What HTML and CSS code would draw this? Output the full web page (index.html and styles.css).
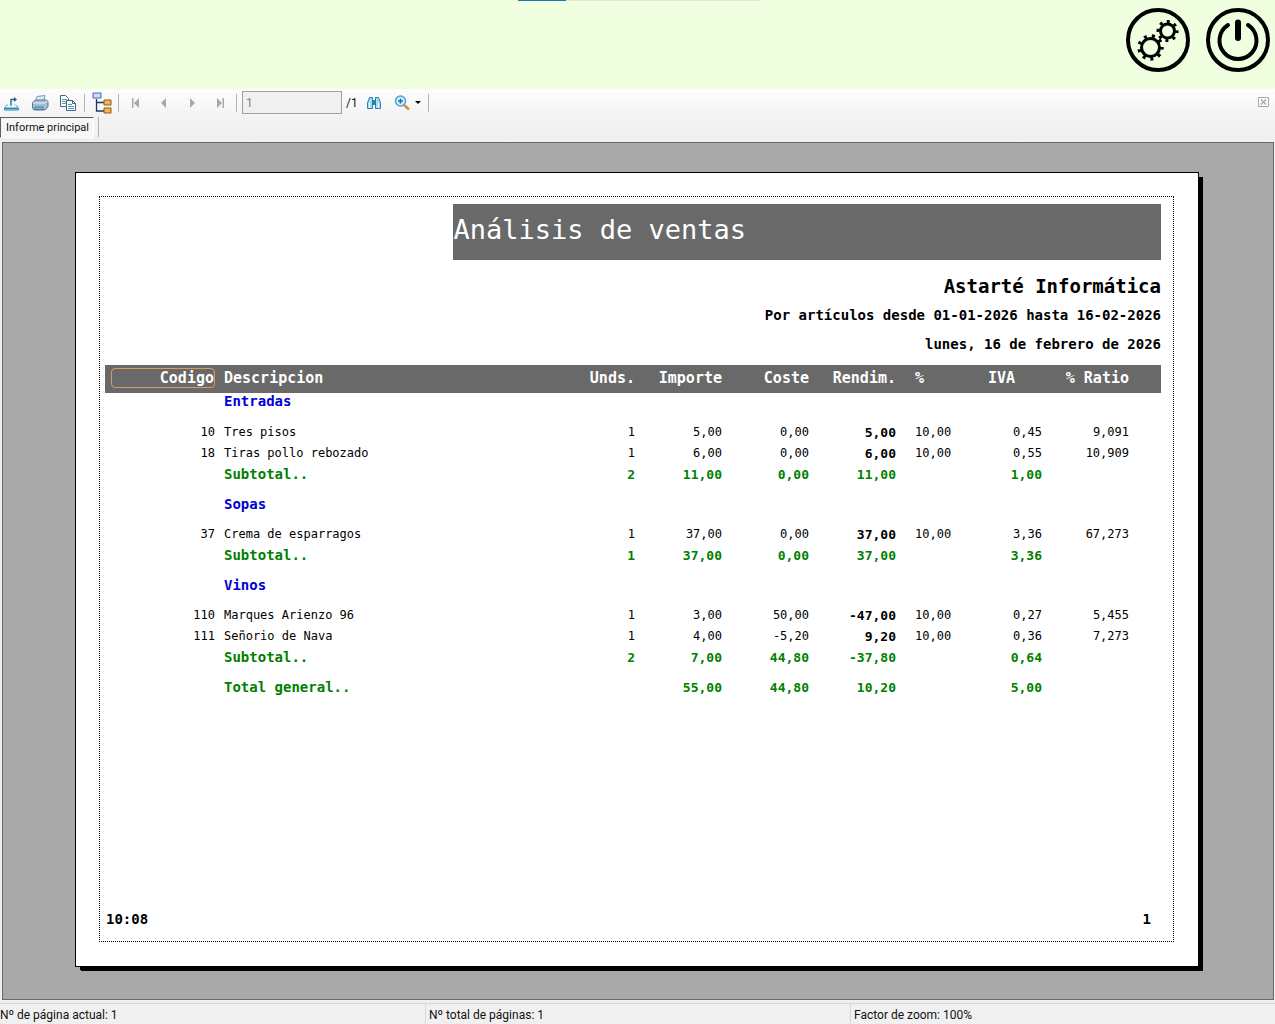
FILE: index.html
```
<!DOCTYPE html>
<html lang="es">
<head>
    <meta charset="UTF-8">
    <meta name="viewport" content="width=device-width, initial-scale=1.0">
    <title>Análisis de ventas</title>
    <link rel="stylesheet" href="styles.css">
</head>
<body>
    <!-- Top bar with the round buttons -->
    <header class="top-bar">
        <div class="progress"><div class="progress-value"></div></div>
        <button class="round-button" aria-label="Configuración">
            <svg viewBox="0 0 64 64" width="64" height="64" fill="none" stroke="#000">
                <circle cx="32" cy="32" r="30" stroke-width="4"/>
                <circle cx="24.500" cy="39.500" r="9" stroke-width="3"/>
                <circle cx="24.500" cy="39.500" r="11.500" stroke-width="3.500" stroke-dasharray="3 5.028" stroke-dashoffset="1"/>
                <circle cx="41.500" cy="23" r="7" stroke-width="3"/>
                <circle cx="41.500" cy="23" r="9.500" stroke-width="3" stroke-dasharray="3 4.461" stroke-dashoffset="1"/>
            </svg>
        </button>
        <button class="round-button" aria-label="Salir">
            <svg viewBox="0 0 64 64" width="64" height="64" fill="none" stroke="#000" stroke-linecap="round">
                <circle cx="32" cy="32" r="30" stroke-width="4"/>
                <path d="M22 17A18.500 18.500 0 1 0 42 17" stroke-width="4"/>
                <path d="M32 14.500v15.500" stroke-width="6"/>
            </svg>
        </button>
    </header>

    <!-- Report toolbar -->
    <div class="toolbar">
        <button class="tool" aria-label="Exportar informe">
            <svg viewBox="0 0 18 18" width="18" height="18" fill="none">
                <path d="M4.500 10.500L1.500 14h14l-3-3.500" fill="#e4f4fb" stroke="#4f9fc0"/>
                <path d="M1.500 14.500h14v1.500h-14z" fill="#bfe6f5" stroke="#2f86b0"/>
                <path d="M8 11.500V5.500h4" stroke="#23607a" stroke-width="1.300"/>
                <path d="M11 3l3 2.500-3 2.500z" fill="#23607a"/>
            </svg>
        </button>
        <button class="tool" aria-label="Imprimir">
            <svg viewBox="0 0 18 18" width="18" height="18">
                <path d="M6 2.500l8-1-1.500 7H4z" fill="#d9ecfa" stroke="#7b98b5"/>
                <path d="M1.500 8.500l3-2.500h11l1.500 1.500v5.500l-3 3H3l-1.500-2z" fill="#a9bbd0" stroke="#5d7898"/>
                <path d="M2 9h11.500l2.500-2" fill="none" stroke="#e8f0f8"/>
                <path d="M4 13h8v2.500H4z" fill="#65c5e8" stroke="#4c7ba0"/>
            </svg>
        </button>
        <button class="tool" aria-label="Copiar">
            <svg viewBox="0 0 18 18" width="18" height="18" stroke="#53616c">
                <path d="M1.500 1.500h5l3 3v8h-8z" fill="#fff"/>
                <path d="M3 5.500h5M3 7.500h5M3 9.500h5" stroke="#3aa0ce"/>
                <path d="M7.500 6.500h6l3 3v7h-9z" fill="#fff"/>
                <path d="M13.500 6.500v3h3" fill="none"/>
                <path d="M9 10.500h4M9 12.500h6M9 14.500h6" stroke="#3aa0ce"/>
            </svg>
        </button>
        <span class="separator"></span>
        <button class="tool" aria-label="Árbol de grupos">
            <svg viewBox="0 0 20 22" width="20" height="22">
                <path d="M4.500 7v12h8M4.500 10.500h8" fill="none" stroke="#123a6b" stroke-width="1.300"/>
                <path d="M1 1h8v5H1z" fill="#c9dcff" stroke="#4a63a8"/>
                <path d="M12 8h7v5h-7z" fill="#f6b54a" stroke="#8a5a20"/>
                <path d="M12 16h7v5h-7z" fill="#f6b54a" stroke="#8a5a20"/>
            </svg>
        </button>
        <span class="separator"></span>
        <button class="tool" aria-label="Primera página" disabled>
            <svg viewBox="0 0 12 12" width="12" height="12" fill="#a8a8a8"><path d="M2 1h1.500v10H2zM9 1v10L4 6z"/></svg>
        </button>
        <button class="tool" aria-label="Página anterior" disabled>
            <svg viewBox="0 0 12 12" width="12" height="12" fill="#a8a8a8"><path d="M8 1v10L3 6z"/></svg>
        </button>
        <button class="tool" aria-label="Página siguiente" disabled>
            <svg viewBox="0 0 12 12" width="12" height="12" fill="#a8a8a8"><path d="M4 1v10l5-5z"/></svg>
        </button>
        <button class="tool" aria-label="Última página" disabled>
            <svg viewBox="0 0 12 12" width="12" height="12" fill="#a8a8a8"><path d="M3 1v10l5-5zM8.500 1H10v10H8.500z"/></svg>
        </button>
        <span class="separator"></span>
        <input class="page-input" id="page" type="text" value="1" disabled>
        <label class="page-total" for="page">/1</label>
        <button class="tool" aria-label="Buscar">
            <svg viewBox="0 0 16 16" width="16" height="16" stroke="#2f7fae">
                <path d="M1.500 13.500V8l2-5.500h3V13.500zM14.500 13.500V8l-2-5.500h-3V13.500z" fill="#a5dcf5"/>
                <path d="M6.500 5.500h3v4h-3z" fill="#2f7fae"/>
                <path d="M3.500 8v5M12.500 8v5" stroke="#fff"/>
            </svg>
        </button>
        <button class="tool zoom-tool" aria-label="Zoom">
            <svg viewBox="0 0 18 18" width="18" height="18" fill="none">
                <path d="M11 11l5 4.500" stroke="#e08a35" stroke-width="2.500"/>
                <circle cx="7.500" cy="7" r="5" fill="#d8f0fc" stroke="#4ba3d5" stroke-width="1.500"/>
                <path d="M7.500 4.500v5M5 7h5" stroke="#1f6cab" stroke-width="1.500"/>
            </svg>
            <svg viewBox="0 0 6 3" width="6" height="3"><path d="M0 0h6L3 3z"/></svg>
        </button>
        <span class="separator"></span>
        <button class="tool close-tool" aria-label="Cerrar">
            <svg viewBox="0 0 11 11" width="11" height="11" fill="none" stroke="#a8a8a8">
                <path d="M.5.5h10v9h-10z"/>
                <path d="M3 2.500l5 5M8 2.500l-5 5" stroke-width="1.300"/>
            </svg>
        </button>
    </div>

    <div class="tabs">
        <button class="tab">Informe principal</button>
        <span class="separator"></span>
    </div>

    <!-- Report page -->
    <main class="viewer">
        <div class="paper">
            <div class="report">
                <h1 class="report-title">Análisis de ventas</h1>
                <div class="company">Astarté Informática</div>
                <div class="report-info">Por artículos desde 01-01-2026 hasta 16-02-2026</div>
                <div class="report-info">lunes, 16 de febrero de 2026</div>

                <table class="sales">
                    <colgroup>
                        <col class="col-code">
                        <col>
                        <col class="col-number">
                        <col class="col-number">
                        <col class="col-number">
                        <col class="col-number">
                        <col class="col-percent">
                        <col class="col-number">
                        <col class="col-ratio">
                    </colgroup>
                    <thead>
                        <tr>
                            <th><span class="selected">Codigo</span></th>
                            <th class="text">Descripcion</th>
                            <th>Unds.</th>
                            <th>Importe</th>
                            <th>Coste</th>
                            <th>Rendim.</th>
                            <th class="percent">%</th>
                            <th class="iva">IVA</th>
                            <th class="ratio">% Ratio</th>
                        </tr>
                    </thead>
                    <tbody>
                        <tr class="group first"><td></td><td class="text" colspan="8">Entradas</td></tr>
                        <tr><td>10</td><td class="text">Tres pisos</td><td>1</td><td>5,00</td><td>0,00</td><td class="yield">5,00</td><td class="percent">10,00</td><td>0,45</td><td class="ratio">9,091</td></tr>
                        <tr><td>18</td><td class="text">Tiras pollo rebozado</td><td>1</td><td>6,00</td><td>0,00</td><td class="yield">6,00</td><td class="percent">10,00</td><td>0,55</td><td class="ratio">10,909</td></tr>
                        <tr class="total"><td></td><td class="text">Subtotal..</td><td>2</td><td>11,00</td><td>0,00</td><td>11,00</td><td></td><td>1,00</td><td></td></tr>
                    </tbody>
                    <tbody>
                        <tr class="group"><td></td><td class="text" colspan="8">Sopas</td></tr>
                        <tr><td>37</td><td class="text">Crema de esparragos</td><td>1</td><td>37,00</td><td>0,00</td><td class="yield">37,00</td><td class="percent">10,00</td><td>3,36</td><td class="ratio">67,273</td></tr>
                        <tr class="total"><td></td><td class="text">Subtotal..</td><td>1</td><td>37,00</td><td>0,00</td><td>37,00</td><td></td><td>3,36</td><td></td></tr>
                    </tbody>
                    <tbody>
                        <tr class="group"><td></td><td class="text" colspan="8">Vinos</td></tr>
                        <tr><td>110</td><td class="text">Marques Arienzo 96</td><td>1</td><td>3,00</td><td>50,00</td><td class="yield">-47,00</td><td class="percent">10,00</td><td>0,27</td><td class="ratio">5,455</td></tr>
                        <tr><td>111</td><td class="text">Señorio de Nava</td><td>1</td><td>4,00</td><td>-5,20</td><td class="yield">9,20</td><td class="percent">10,00</td><td>0,36</td><td class="ratio">7,273</td></tr>
                        <tr class="total"><td></td><td class="text">Subtotal..</td><td>2</td><td>7,00</td><td>44,80</td><td>-37,80</td><td></td><td>0,64</td><td></td></tr>
                    </tbody>
                    <tfoot>
                        <tr class="total grand"><td></td><td class="text">Total general..</td><td></td><td>55,00</td><td>44,80</td><td>10,20</td><td></td><td>5,00</td><td></td></tr>
                    </tfoot>
                </table>

                <div class="report-footer">
                    <span>10:08</span>
                    <span>1</span>
                </div>
            </div>
        </div>
    </main>

    <footer class="status-bar">
        <div>Nº de página actual: 1</div>
        <div>Nº total de páginas: 1</div>
        <div>Factor de zoom: 100%</div>
    </footer>
</body>
</html>
```
FILE: styles.css
```
* {
    box-sizing: border-box;
}

body {
    margin: 0;
    min-height: 100vh;
    display: flex;
    flex-direction: column;
    font-family: Roboto, "Open Sans", sans-serif;
    font-size: 12px;
    color: #111;
    background-color: #f0f0f0;
}

button {
    padding: 0;
    border: none;
    background: none;
    font: inherit;
    color: inherit;
}

svg {
    display: block;
}

/* Top bar */
.top-bar {
    position: relative;
    height: 89px;
    padding: 8px 5px;
    display: flex;
    justify-content: flex-end;
    align-items: flex-start;
    gap: 16px;
    background-color: #f1ffe1;
}

.progress {
    position: absolute;
    top: 0;
    left: 518px;
    width: 242px;
    height: 1px;
    background-color: #e3e8dc;
}

.progress-value {
    width: 20%;
    height: 1px;
    background-color: #1f77ad;
}

.round-button {
    border-radius: 50%;
    cursor: pointer;
}

/* Toolbar */
.toolbar {
    height: 28px;
    padding-bottom: 1px;
    display: flex;
    align-items: center;
    gap: 4px;
    background: linear-gradient(#fdfdfd, #f3f3f3);
}

.tool {
    width: 24px;
    height: 24px;
    display: flex;
    align-items: center;
    justify-content: center;
}

.zoom-tool {
    width: 34px;
    gap: 4px;
}

.close-tool {
    margin-left: auto;
}

.separator {
    width: 1px;
    height: 18px;
    margin-right: 1px;
    background-color: #b4b4b4;
}

.page-input {
    width: 100px;
    height: 23px;
    padding: 0 3px;
    border: 1px solid #a0a0a0;
    background-color: #f0f0f0;
    font: inherit;
    color: #808080;
}

.page-total {
    width: 12px;
}

/* Tabs */
.tabs {
    height: 25px;
    display: flex;
    align-items: flex-start;
    gap: 4px;
    background: linear-gradient(#f3f3f3, #efefef);
}

.tab {
    height: 21px;
    padding: 0 4px 0 5px;
    border: 1px solid;
    border-color: #606060 #fff #fff #606060;
    background-color: #f6f6f6;
    font-size: 11px;
}

.tabs .separator {
    height: 20px;
}

/* Viewer */
.viewer {
    flex: 1;
    margin: 0 1px 3px 2px;
    padding: 29px 74px 32px 72px;
    display: flex;
    border: 1px solid #696969;
    background-color: #a9a9a9;
}

.paper {
    flex: 1;
    padding: 23px 24px 24px 23px;
    display: flex;
    border: 1px solid #000;
    background-color: #fff;
    box-shadow: 5px 5px 0 -1px #000, 4px 4px 0 -1px #000, 5px 4px 0 -1px #000;
}

.report {
    flex: 1;
    padding: 7px 12px 12px 5px;
    display: flex;
    flex-direction: column;
    border: 1px dotted #000;
    font-family: "DejaVu Sans Mono", monospace;
    font-weight: bold;
    color: #000;
}

.report-title {
    height: 56px;
    margin: 0 0 12px 33%;
    font-size: 27px;
    font-weight: normal;
    line-height: 52px;
    color: #fff;
    background-color: #696969;
}

.company {
    font-size: 19px;
    line-height: 29px;
    text-align: right;
}

.report-info {
    font-size: 14px;
    line-height: 29px;
    text-align: right;
}

/* Sales table */
.sales {
    width: 100%;
    margin-top: 6px;
    table-layout: fixed;
    border-collapse: collapse;
    font-size: 12px;
}

.col-code {
    width: 110px;
}

.col-number {
    width: 87px;
}

.col-percent {
    width: 59px;
}

.col-ratio {
    width: 119px;
}

.sales th {
    height: 28px;
    padding: 0 0 2px;
    font-size: 15px;
    line-height: 18px;
    text-align: right;
    color: #fff;
    background-color: #696969;
}

.sales td {
    height: 21px;
    padding: 0;
    font-weight: normal;
    line-height: 17px;
    text-align: right;
    white-space: nowrap;
}

.sales .text {
    padding-left: 9px;
    text-align: left;
}

.sales .percent {
    padding-left: 19px;
    text-align: left;
}

.sales .ratio {
    padding-right: 32px;
}

.sales .iva {
    padding-right: 27px;
}

.selected {
    display: block;
    margin-left: 6px;
    border: 1px solid #d99a62;
    border-radius: 4px;
}

.sales .yield {
    font-size: 13px;
    font-weight: bold;
}

.sales .group td {
    height: 39px;
    font-size: 14px;
    font-weight: bold;
    color: #0000d8;
}

.sales .first td {
    height: 29px;
    padding-bottom: 12px;
}

.sales .total td {
    font-size: 13px;
    font-weight: bold;
    color: #008000;
}

.sales .total .text {
    font-size: 14px;
}

.sales .grand td {
    height: 39px;
}

.report-footer {
    margin-top: auto;
    padding: 0 10px 0 1px;
    display: flex;
    justify-content: space-between;
    font-size: 14px;
    line-height: 20px;
}

/* Status bar */
.status-bar {
    height: 21px;
    display: grid;
    grid-template-columns: 1fr 1fr 1fr;
    border-top: 1px solid #d7d7d7;
    line-height: 22px;
}

.status-bar div + div {
    padding-left: 3px;
    border-left: 1px solid #d7d7d7;
}
```
